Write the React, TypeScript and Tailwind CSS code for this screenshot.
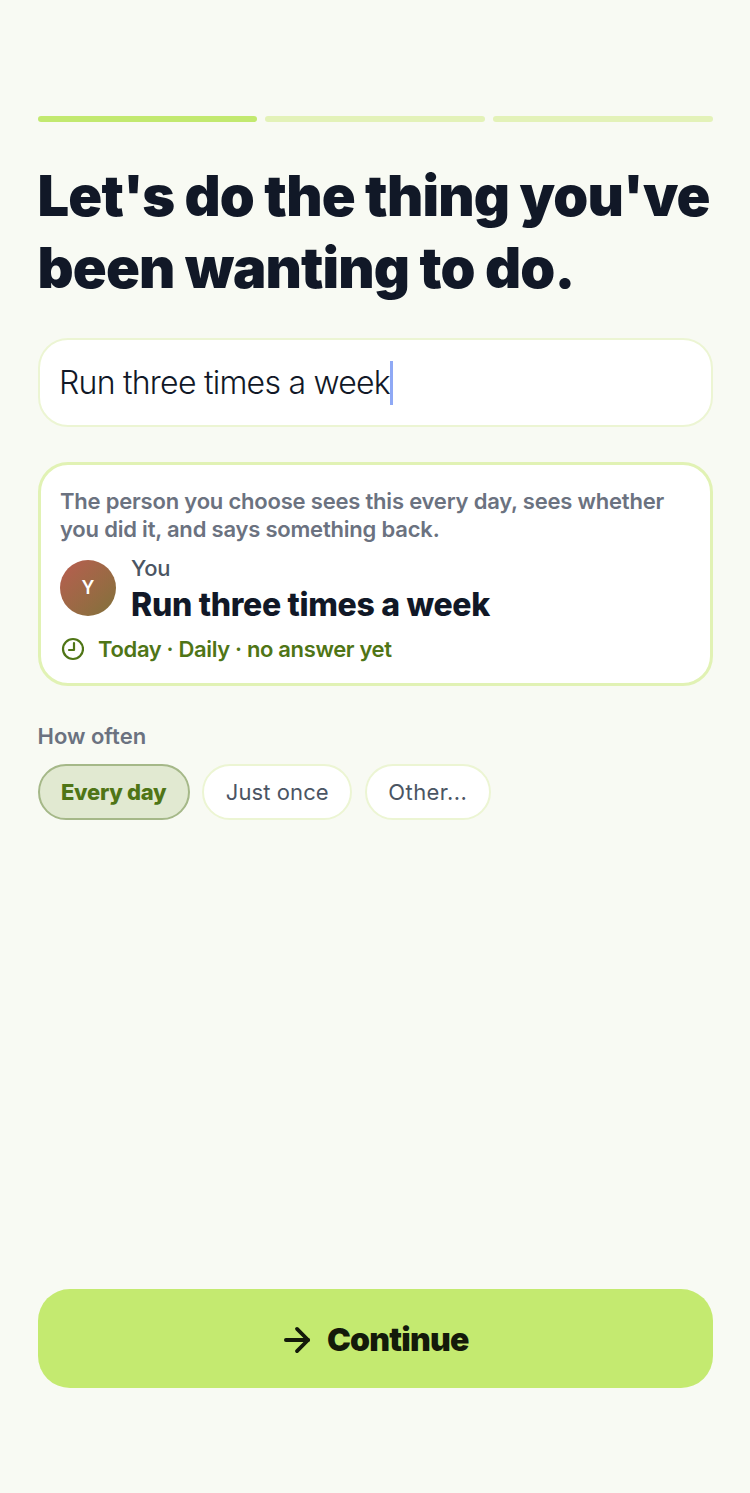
import React from 'react';
import { ArrowRight } from 'lucide-react';

const font = { fontFamily: 'Inter, "Noto Sans", sans-serif' };

function ClockIcon() {
  return (
    <svg width="24" height="24" viewBox="0 0 24 24" fill="none" stroke="#4f7516" strokeWidth="2.2" strokeLinecap="round" strokeLinejoin="round">
      <circle cx="13" cy="12" r="10" />
      <path d="M14 6v7H9" />
    </svg>
  );
}

export default function App() {
  return (
    <div className="flex h-[1493px] w-[750px] flex-col bg-[#f8faf3] px-[37.5px] pt-[116px] pb-[105px]" style={font}>
      <div className="flex gap-2">
        <div className="h-1.5 flex-1 rounded-full bg-[#c2e96f]" />
        <div className="h-1.5 flex-1 rounded-full bg-[#e3f2b8]" />
        <div className="h-1.5 flex-1 rounded-full bg-[#e3f2b8]" />
      </div>

      <h1 className="mt-[38px] text-[56px] leading-[72px] font-black tracking-[-0.84px] whitespace-nowrap text-[#111827]">
        Let's do the thing you've<br />been wanting to do.
      </h1>

      <div className="mt-[34px] flex h-[89px] items-center rounded-[30px] border-2 border-[#ecf5d3] bg-white px-[19.5px] text-[32px] font-light tracking-[-0.75px] text-[#111827]">
        Run three times a week
        <span className="h-[44px] w-[3px] bg-[#8fa9f5]" />
      </div>

      <div className="mt-[35px] flex h-[224px] flex-col rounded-[30px] border-[3px] border-[#e1f2b4] bg-white px-[19.5px] pt-[22px]">
        <p className="text-[22px] leading-[28px] font-semibold tracking-[-0.2px] text-[#6b7280]">
          The person you choose sees this every day, sees whether you did it, and says something back.
        </p>
        <div className="mt-[11px] flex items-start gap-[15px]">
          <div className="mt-[6px] flex h-14 w-14 items-center justify-center rounded-full bg-gradient-to-br from-[#b85c50] to-[#80713a] text-lg font-semibold text-white">
            Y
          </div>
          <div>
            <div className="text-[22px] leading-[28px] font-medium tracking-[-0.2px] text-[#4b5563]">You</div>
            <div className="mt-[2px] text-[32px] leading-[42px] font-extrabold tracking-[-0.3px] text-[#111827]">Run three times a week</div>
          </div>
        </div>
        <div className="mt-[7px] flex items-center gap-[14px]">
          <ClockIcon />
          <span className="text-[22px] leading-[32px] font-semibold tracking-[-0.35px] text-[#4f7516]">Today · Daily · no answer yet</span>
        </div>
      </div>

      <div className="mt-[35px] text-[22px] leading-[30px] font-semibold text-[#6b7280]">How often</div>
      <div className="mt-[13px] flex gap-[12.5px]">
        <div className="flex h-[56px] items-center rounded-full border-2 border-[#a5b888] bg-[#e1e9d1] px-[21.5px] text-[22px] font-extrabold tracking-[-0.3px] text-[#4f7516]">Every day</div>
        <div className="flex h-[56px] items-center rounded-full border-2 border-[#ecf5d3] bg-white px-[21.5px] text-[22px] font-normal tracking-[0.1px] text-[#4b5563]">Just once</div>
        <div className="flex h-[56px] items-center rounded-full border-2 border-[#ecf5d3] bg-white px-[21.5px] text-[22px] font-normal tracking-[0.4px] text-[#4b5563]">Other...</div>
      </div>

      <button className="mt-auto flex h-[99px] items-center justify-center gap-[10.5px] rounded-[32px] bg-[#c4ea70] pt-[2px] pr-[3px] text-[32px] font-black tracking-[-0.8px] text-[#141a0a]">
        <ArrowRight size={38} strokeWidth={2.4} />
        Continue
      </button>
    </div>
  );
}
